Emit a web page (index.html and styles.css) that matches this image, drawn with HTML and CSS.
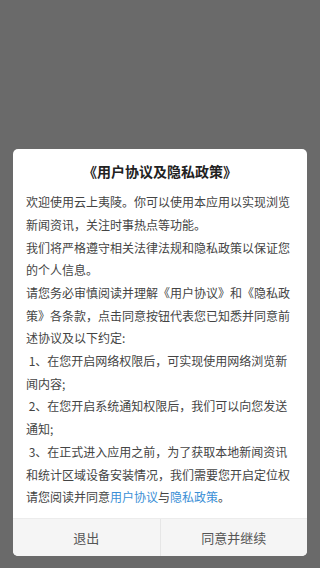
FILE: index.html
```html
<!DOCTYPE html>
<html lang="zh-CN">
<head>
    <meta charset="UTF-8">
    <meta name="viewport" content="width=device-width, initial-scale=1.0">
    <title>用户协议及隐私政策</title>

    <link rel="stylesheet" href="styles.css">

</head>
<body>

    <div class="dialog">

        <h1 class="dialog-title">《用户协议及隐私政策》</h1>

        <div class="dialog-body">
            <p>欢迎使用云上夷陵。你可以使用本应用以实现浏览新闻资讯，关注时事热点等功能。</p>
            <p>我们将严格遵守相关法律法规和隐私政策以保证您的个人信息。</p>
            <p>请您务必审慎阅读并理解《用户协议》和《隐私政策》各条款，点击同意按钮代表您已知悉并同意前述协议及以下约定:</p>
            <p>&nbsp;1、在您开启网络权限后，可实现使用网络浏览新闻内容;</p>
            <p>&nbsp;2、在您开启系统通知权限后，我们可以向您发送通知;</p>
            <p>&nbsp;3、在正式进入应用之前，为了获取本地新闻资讯和统计区域设备安装情况，我们需要您开启定位权</p>
            <p>请您阅读并同意<a href="#">用户协议</a>与<a href="#">隐私政策</a>。</p>
        </div>

        <div class="dialog-buttons">
            <button class="btn">退出</button>
            <button class="btn">同意并继续</button>
        </div>

    </div>

</body>
</html>
```

FILE: styles.css
```css
*
{
    margin: 0;
    padding: 0;
    box-sizing: border-box;
}

html, body
{
    height: 100%;
}

body
{
    display: flex;
    flex-direction: column;
    justify-content: flex-end;
    padding: 0 13px 12px;
    background: #6a6a6a;
    font-family: "Noto Sans CJK SC", "Noto Sans", sans-serif;
}

.dialog
{
    background: #fff;
    border-radius: 5px;
    overflow: hidden;
}

.dialog-title
{
    padding-top: 12px;
    font-size: 14px;
    line-height: 20px;
    font-weight: bold;
    color: #222;
    text-align: center;
}

.dialog-body
{
    padding: 10px 13px 9px;
    font-size: 12px;
    line-height: 22.7px;
    color: #444;
}

.dialog-body a
{
    color: #3a8fd6;
    text-decoration: none;
}

.dialog-buttons
{
    display: flex;
    border-top: 1px solid #ececec;
    background: #f5f5f5;
}

.btn
{
    flex: 1;
    height: 37px;
    border: none;
    background: transparent;
    font-family: inherit;
    font-size: 13px;
    color: #555;
}

.btn + .btn
{
    border-left: 1px solid #e6e6e6;
}
```
